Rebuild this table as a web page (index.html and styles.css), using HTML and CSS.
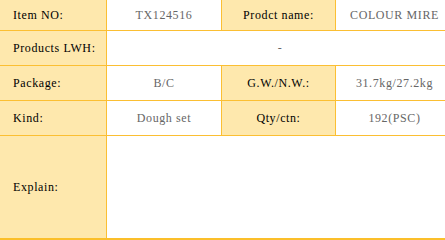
FILE: index.html
```html
<!DOCTYPE html>
<html lang="en">
<head>
<meta charset="utf-8">
<title>Product details</title>
<link rel="stylesheet" href="styles.css">
</head>
<body>
  <div class="spec">
    <div class="cell label">Item NO:</div>
    <div class="cell value">TX124516</div>
    <div class="cell label center">Prodct name:</div>
    <div class="cell value">COLOUR MIRE</div>

    <div class="cell label">Products LWH:</div>
    <div class="cell value wide">-</div>

    <div class="cell label">Package:</div>
    <div class="cell value">B/C</div>
    <div class="cell label center">G.W./N.W.:</div>
    <div class="cell value">31.7kg/27.2kg</div>

    <div class="cell label">Kind:</div>
    <div class="cell value">Dough set</div>
    <div class="cell label center">Qty/ctn:</div>
    <div class="cell value">192(PSC)</div>

    <div class="cell label">Explain:</div>
    <div class="cell value wide"></div>
  </div>
</body>
</html>
```

FILE: styles.css
```css
html, body {
  margin: 0;
  padding: 0;
  background: #ffffff;
  overflow: hidden;
}

.spec {
  display: grid;
  grid-template-columns: 106px 114px 113px 117px;
  grid-template-rows: 30px 34px 34px 34px 102px;
  gap: 1px;
  width: 453px;
  background: #fbbf33;
  border-bottom: 2px solid #fbbf2a;
  font-family: "Liberation Serif", "Times New Roman", serif;
  font-size: 12px;
  letter-spacing: 0.6px;
}

.cell {
  display: flex;
  align-items: center;
  white-space: nowrap;
}

.label {
  background: #fee8ad;
  color: #000000;
  padding-left: 13px;
}

.label.center {
  justify-content: center;
  padding-left: 0;
}

.value {
  background: #ffffff;
  color: #666666;
  justify-content: center;
}

.wide {
  grid-column: 2 / 5;
}
```
